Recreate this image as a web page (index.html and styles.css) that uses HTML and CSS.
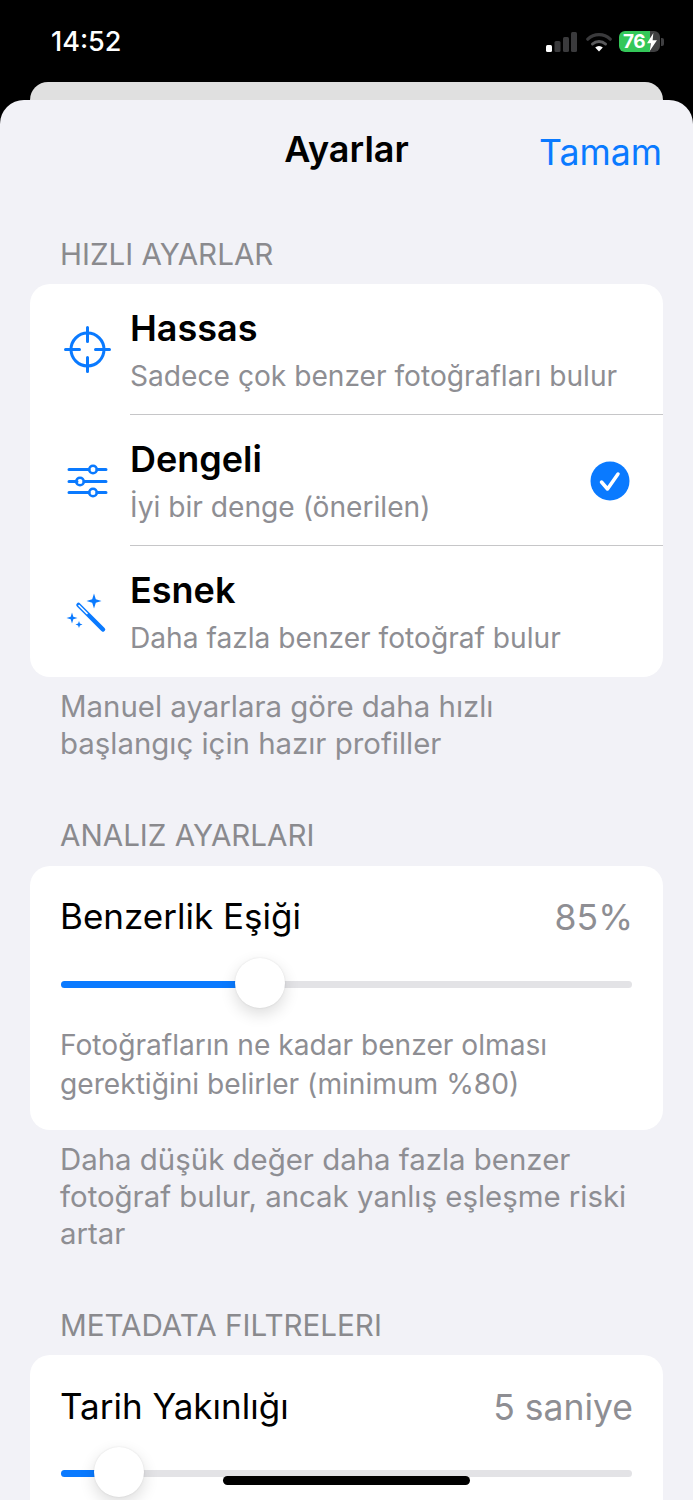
FILE: index.html
```html
<!DOCTYPE html>
<html lang="tr">
<head>
<meta charset="utf-8">
<title>Ayarlar</title>
<link rel="stylesheet" href="styles.css">
</head>
<body>
<div class="screen">
  <div class="status">
    <span class="time">14:52</span>
    <div class="status-icons">
      <svg class="signal" width="31" height="20" viewBox="0 0 31 20"><rect x="0" y="13" width="6" height="7" rx="1.500" fill="#fff"/><rect x="8.500" y="9" width="6" height="11" rx="1.500" fill="#3a3a3c"/><rect x="17" y="5" width="6" height="15" rx="1.500" fill="#3a3a3c"/><rect x="25" y="0" width="6" height="20" rx="1.500" fill="#3a3a3c"/></svg>
      <svg class="wifi" width="26" height="20" viewBox="0 0 26 20"><path d="M1.800 7.200a16 16 0 0 1 22.400 0" fill="none" stroke="#3a3a3c" stroke-width="3.200" stroke-linecap="round"/><path d="M6.500 12a9.400 9.400 0 0 1 13 0" fill="none" stroke="#5a5a5c" stroke-width="3" stroke-linecap="round"/><path d="M13 19.500l-3.800-4a5.500 5.500 0 0 1 7.600 0z" fill="#fff"/></svg>
      <div class="battery">
        <div class="battery-body"><span class="battery-num">76</span><svg class="bolt" width="10" height="18" viewBox="0 0 11 20"><path d="M7 0L0 11.500h4.200L3 20l8-12H6.200z" fill="#fff"/></svg></div>
        <div class="battery-cap"></div>
      </div>
    </div>
  </div>
  <div class="back-sheet"></div>
  <main class="sheet">
    <header class="nav">
      <h1 class="nav-title">Ayarlar</h1>
      <a class="nav-done">Tamam</a>
    </header>

    <h2 class="sec-head">HIZLI AYARLAR</h2>
    <section class="card">
      <div class="preset">
        <svg class="preset-icon" width="48" height="48" viewBox="0 0 48 48" fill="none" stroke="#0a7aff" stroke-width="3" stroke-linecap="round"><circle cx="23.500" cy="23.500" r="16.500"/><path d="M23.500 1.500v14M23.500 31.500v14M1.500 23.500h14M31.500 23.500h14"/></svg>
        <div class="preset-text">
          <div class="preset-title">Hassas</div>
          <div class="preset-sub">Sadece çok benzer fotoğrafları bulur</div>
        </div>
      </div>
      <div class="preset">
        <svg class="preset-icon" width="48" height="48" viewBox="0 0 48 48" fill="none" stroke="#0a7aff" stroke-width="3" stroke-linecap="round"><path d="M5 12.500h20M33 12.500h9M5 24.500h8M20 24.500h22M5 35.500h20M33 35.500h9"/><circle cx="29" cy="12.500" r="3.800" stroke-width="2.600"/><circle cx="16" cy="24.500" r="3.800" stroke-width="2.600"/><circle cx="29" cy="35.500" r="3.800" stroke-width="2.600"/></svg>
        <div class="preset-text">
          <div class="preset-title">Dengeli</div>
          <div class="preset-sub">İyi bir denge (önerilen)</div>
        </div>
        <svg class="check" width="40" height="40" viewBox="0 0 40 40"><circle cx="20" cy="20" r="19.500" fill="#0a7aff"/><path d="M11.500 21l6 7 10.500-15" fill="none" stroke="#fff" stroke-width="3.500" stroke-linecap="round" stroke-linejoin="round"/></svg>
      </div>
      <div class="preset">
        <svg class="preset-icon" width="48" height="48" viewBox="0 0 48 48" fill="none"><path d="M14.500 17l24.500 24.500" stroke="#0a7aff" stroke-width="4.500" stroke-linecap="round"/><path d="M15 17.500l8 8" stroke="#fff" stroke-width="1.600" stroke-linecap="round"/><path d="M30 5.500l1.800 5.700 5.700 1.800-5.700 1.800-1.800 5.700-1.800-5.700-5.700-1.800 5.700-1.800zM8 24.500l1.300 4.200 4.200 1.300-4.200 1.300-1.300 4.200-1.300-4.200-4.200-1.300 4.200-1.300zM15 33l.9 2.600 2.600.9-2.600.9-.9 2.600-.9-2.600-2.600-.9 2.600-.9z" fill="#0a7aff"/></svg>
        <div class="preset-text">
          <div class="preset-title">Esnek</div>
          <div class="preset-sub">Daha fazla benzer fotoğraf bulur</div>
        </div>
      </div>
    </section>
    <p class="sec-foot">Manuel ayarlara göre daha hızlı<br>başlangıç için hazır profiller</p>

    <h2 class="sec-head sec-head-gap">ANALIZ AYARLARI</h2>
    <section class="card card-slider">
      <div class="row-head"><span class="row-title">Benzerlik Eşiği</span><span class="row-value">85%</span></div>
      <div class="slider"><div class="slider-fill" style="width:199px"></div><div class="slider-thumb" style="left:174px"></div></div>
      <p class="row-desc">Fotoğrafların ne kadar benzer olması<br>gerektiğini belirler (minimum %80)</p>
    </section>
    <p class="sec-foot">Daha düşük değer daha fazla benzer<br>fotoğraf bulur, ancak yanlış eşleşme riski<br>artar</p>

    <h2 class="sec-head sec-head-gap sec-head-last">METADATA FILTRELERI</h2>
    <section class="card card-slider card-slider-last">
      <div class="row-head"><span class="row-title">Tarih Yakınlığı</span><span class="row-value">5 saniye</span></div>
      <div class="slider"><div class="slider-fill" style="width:58px"></div><div class="slider-thumb" style="left:33px"></div></div>
    </section>
  </main>
  <div class="home-bar"></div>
</div>
</body>
</html>
```
FILE: styles.css
```css
* { box-sizing: border-box; }
html, body { margin: 0; padding: 0; background: #000; }
body { font-family: Inter, "Liberation Sans", sans-serif; }
.screen { position: relative; width: 693px; height: 1500px; overflow: hidden; background: #000; display: flex; flex-direction: column; }
.status { height: 82px; flex: none; display: flex; justify-content: space-between; align-items: flex-start; padding: 26px 29px 0 51px; }
.time { color: #fff; font-size: 27px; font-weight: 500; line-height: 32px; }
.status-icons { display: flex; align-items: center; gap: 7px; padding-top: 5px; }
.signal { margin-right: 2px; }
.battery { display: flex; align-items: center; gap: 1px; }
.battery-body { width: 41px; height: 21px; border-radius: 6px; background: linear-gradient(90deg, #34c759 0 76%, #3f3f41 76%); display: flex; align-items: center; padding-left: 4px; }
.battery-num { color: #fff; font-size: 19px; font-weight: 700; line-height: 21px; letter-spacing: -0.5px; }
.bolt { margin-left: 2px; flex: none; }
.battery-cap { width: 3px; height: 8px; border-radius: 0 2px 2px 0; background: #3f3f41; }
.back-sheet { height: 18px; flex: none; margin: 0 30px; background: #e0e0e0; border-radius: 20px 20px 0 0; }
.sheet { flex: 1; background: #f2f2f7; border-radius: 24px 24px 0 0; padding: 0 30px; overflow: hidden; }
.nav { position: relative; height: 100px; display: flex; align-items: center; justify-content: center; }
.nav-title { margin: 0 0 2px; font-size: 36px; font-weight: 600; color: #000; line-height: 44px; }
.nav-done { position: absolute; right: 1px; top: 30px; font-size: 35.700px; line-height: 44px; color: #0a7aff; }
.sec-head { margin: 36px 30px 12px; font-size: 29.600px; font-weight: 400; line-height: 36px; color: #8a8a8e; white-space: nowrap; }
.sec-head-gap { margin-top: 55px; margin-bottom: 13px; }
.sec-head-last { margin-bottom: 12px; }
.card { background: #fff; border-radius: 20px; }
.preset { height: 131px; display: flex; align-items: center; position: relative; padding: 0 33px 0 34px; }
.preset + .preset::before { content: ""; position: absolute; left: 100px; right: 0; top: -1px; height: 1px; background: #c6c6c8; }
.preset-icon { flex: none; margin-right: 18px; }
.preset-text { flex: 1; min-width: 0; }
.preset-title { font-size: 36px; font-weight: 600; line-height: 44px; color: #000; }
.preset-sub { font-size: 28.150px; line-height: 36px; margin-top: 8px; color: #8e8e93; white-space: nowrap; }
.check { flex: none; }
.sec-foot { margin: 11px 30px 0; font-size: 29.400px; line-height: 37px; color: #8e8e93; white-space: nowrap; }
.card-slider { padding: 28px 31px 26px 30px; }
.card-slider-last { padding-top: 29px; min-height: 220px; }
.card-slider-last .slider { margin-top: 42px; }
.row-head { display: flex; justify-content: space-between; align-items: center; height: 44px; margin-right: -1px; }
.row-title { font-size: 35px; line-height: 44px; color: #000; }
.row-value { font-size: 35.500px; line-height: 44px; margin-top: 3px; color: #8e8e93; }
.slider { position: relative; height: 7px; margin: 43px 0 0 1px; background: #e3e3e6; border-radius: 4px; }
.slider-fill { height: 7px; background: #0a7aff; border-radius: 4px; }
.slider-thumb { position: absolute; top: -23px; width: 50px; height: 50px; border-radius: 50%; background: #fff; box-shadow: 0 6px 16px rgba(0,0,0,.14), 0 0 2px rgba(0,0,0,.1); }
.row-desc { margin: 38px 0 0; font-size: 28.150px; line-height: 39px; color: #8e8e93; white-space: nowrap; }
.home-bar { position: absolute; left: 223px; top: 1476px; width: 247px; height: 9px; border-radius: 5px; background: #000; }
```
